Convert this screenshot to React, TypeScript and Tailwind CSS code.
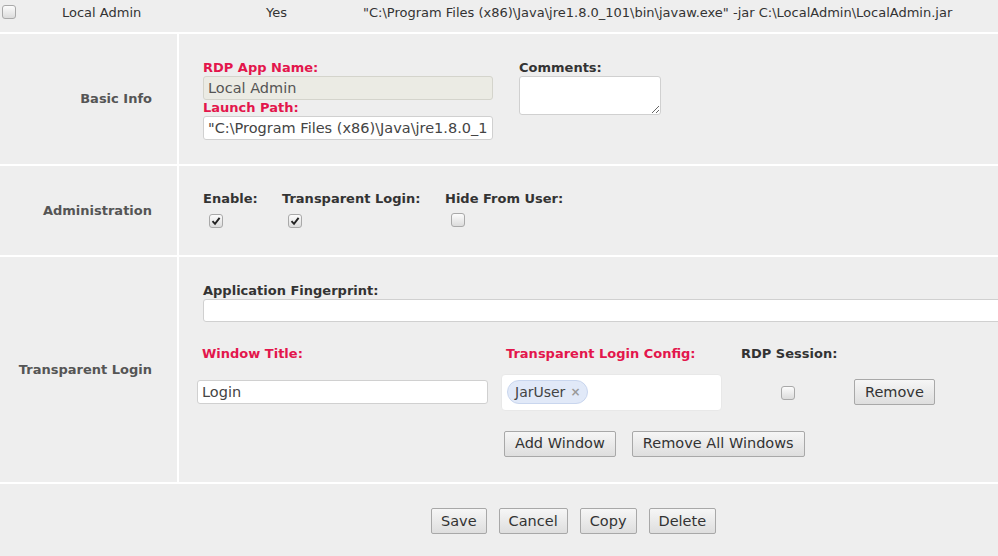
import React from 'react';

const font = { fontFamily: '"DejaVu Sans", Verdana, sans-serif' };

const Check = ({ checked = false }: { checked?: boolean }) => (
  <span className="inline-flex h-[14px] w-[14px] items-center justify-center rounded-[3px] border border-[#a9a9a9] bg-gradient-to-b from-[#fcfcfc] to-[#dcdcdc]">
    {checked && (
      <svg width="10" height="10" viewBox="0 0 10 10">
        <path d="M1.5 5.2 L4 7.8 L8.6 1.8" fill="none" stroke="#222" strokeWidth="1.9" />
      </svg>
    )}
  </span>
);

const Btn = ({ children, small = false }: { children: React.ReactNode; small?: boolean }) => (
  <button
    className={`h-[26px] rounded-[2px] border border-[#a8a8a8] bg-gradient-to-b from-[#f6f6f6] to-[#dedede] text-[14.5px] leading-none text-[#333] ${
      small ? 'px-[9px]' : 'px-[10px]'
    }`}
  >
    {children}
  </button>
);

const Label = ({ children, red = false }: { children: React.ReactNode; red?: boolean }) => (
  <div className={`text-[13px] font-bold leading-[15px] ${red ? 'text-[#e3164c]' : 'text-[#333]'}`}>{children}</div>
);

const Section = ({ title, children, h }: { title: string; children: React.ReactNode; h: string }) => (
  <div className={`grid grid-cols-[179px_1fr] border-b-2 border-white ${h}`}>
    <div className="flex items-center justify-end border-r-2 border-white pr-[25px] text-[13px] font-bold text-[#555]">
      {title}
    </div>
    <div className="min-w-0 overflow-hidden">{children}</div>
  </div>
);

export default function App() {
  return (
    <div style={font} className="h-[556px] w-[998px] overflow-hidden bg-[#eeeeee] text-[#333]">
      {/* list row */}
      <div className="flex h-[34px] items-start border-b-2 border-white pt-[5px] text-[13px] leading-[16px]">
        <span className="ml-[2px] leading-none"><Check /></span>
        <span className="ml-[46px] w-[204px]">Local Admin</span>
        <span className="w-[97px]">Yes</span>
        <span className="whitespace-nowrap">"C:\Program Files (x86)\Java\jre1.8.0_101\bin\javaw.exe" -jar C:\LocalAdmin\LocalAdmin.jar</span>
      </div>

      {/* Basic Info */}
      <Section title="Basic Info" h="h-[132px]">
        <div className="flex gap-[26px] pl-[24px] pt-[26px]">
          <div className="w-[290px]">
            <Label red>RDP App Name:</Label>
            <input
              readOnly
              value="Local Admin"
              className="mt-[1px] h-[24px] w-[290px] rounded-[3px] border border-[#d4d4cc] bg-[#ebebe4] px-[4px] text-[14.5px] text-[#555] outline-none"
              style={font}
            />
            <Label red>Launch Path:</Label>
            <input
              readOnly
              value={'"C:\\Program Files (x86)\\Java\\jre1.8.0_101\\bin\\javaw.exe" -jar C:\\LocalAdmin\\LocalAdmin.jar'}
              className="mt-[1px] h-[24px] w-[290px] rounded-[3px] border border-[#d0d0d0] bg-white px-[4px] text-[14.5px] text-[#444] outline-none"
              style={font}
            />
          </div>
          <div>
            <Label>Comments:</Label>
            <textarea className="mt-[1px] block h-[39px] w-[142px] resize rounded-[3px] border border-[#d0d0d0] bg-white outline-none" />
          </div>
        </div>
      </Section>

      {/* Administration */}
      <Section title="Administration" h="h-[91px]">
        <div className="flex pl-[24px] pt-[25px]">
          {[
            ['Enable:', true, 'w-[79px]'],
            ['Transparent Login:', true, 'w-[163px]'],
            ['Hide From User:', false, ''],
          ].map(([t, c, w]) => (
            <div key={t as string} className={w as string}>
              <Label>{t}</Label>
              <div className="mt-[7px] pl-[6px] leading-none"><Check checked={c as boolean} /></div>
            </div>
          ))}
        </div>
      </Section>

      {/* Transparent Login */}
      <Section title="Transparent Login" h="h-[227px]">
        <div className="pt-[26px]">
          <div className="pl-[24px]">
            <Label>Application Fingerprint:</Label>
            <input className="mt-[1px] h-[23px] w-[820px] rounded-[3px] border border-[#d0d0d0] bg-white outline-none" />
          </div>
          <div className="mt-[23px] flex pl-[23px]">
            <div className="w-[304px]"><Label red>Window Title:</Label></div>
            <div className="w-[235px]"><Label red>Transparent Login Config:</Label></div>
            <Label>RDP Session:</Label>
          </div>
          <div className="mt-[13px] flex items-center pl-[18px]">
            <input
              value="Login"
              readOnly
              className="h-[24px] w-[291px] rounded-[3px] border border-[#d0d0d0] bg-white px-[4px] text-[14.5px] text-[#444] outline-none"
              style={font}
            />
            <div className="ml-[13px] flex h-[37px] w-[221px] items-center rounded-[4px] border border-[#e8e8e8] bg-white pl-[5px]">
              <span className="flex h-[24px] items-center gap-[5px] rounded-full border border-[#c9d6ee] bg-[#e1e9f8] px-[7px] text-[14px] text-[#444]">
                JarUser
                <span className="text-[12px] font-bold text-[#999]">×</span>
              </span>
            </div>
            <div className="ml-[59px] mt-[4px] leading-none"><Check /></div>
            <div className="ml-[59px]"><Btn>Remove</Btn></div>
          </div>
          <div className="mt-[20px] flex gap-[16px] pl-[325px]">
            <Btn>Add Window</Btn>
            <Btn>Remove All Windows</Btn>
          </div>
        </div>
      </Section>

      {/* Actions */}
      <div className="flex gap-[12px] pl-[431px] pt-[24px]">
        <Btn small>Save</Btn>
        <Btn small>Cancel</Btn>
        <Btn small>Copy</Btn>
        <Btn small>Delete</Btn>
      </div>
    </div>
  );
}
